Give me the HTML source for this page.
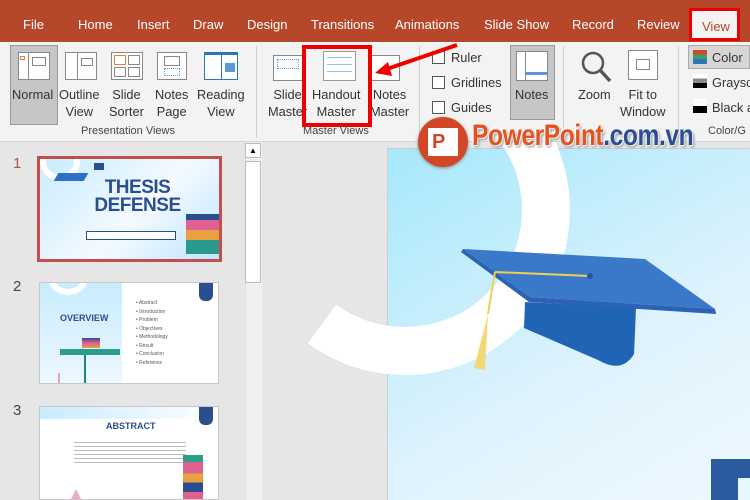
<!DOCTYPE html>
<html><head><meta charset="utf-8"><style>
*{margin:0;padding:0;box-sizing:border-box}
body{width:750px;height:500px;overflow:hidden;position:relative;font-family:"Liberation Sans",sans-serif;background:#e6e6e6}
.abs{position:absolute}
#tabs{left:0;top:0;width:750px;height:42px;background:#b7472a;color:#fff;font-size:13px}
#tabs span{position:absolute;top:17px}
#ribbon{left:0;top:42px;width:750px;height:100px;background:#f3f3f3;border-bottom:1px solid #d6d6d6}
.lbl{position:absolute;font-size:12.8px;color:#333;text-align:center;line-height:17px;white-space:nowrap}
.grp{position:absolute;font-size:11px;color:#444;top:83px;white-space:nowrap}
.sep{position:absolute;top:4px;width:1px;height:92px;background:#d0d0d0}
.ic{position:absolute;border:1px solid #888;background:#fff}
.cb{position:absolute;width:13px;height:13px;border:1px solid #555;background:#fff}
.thumb{position:absolute;left:39px;width:180px;border:1px solid #c8c8c8;overflow:hidden}
.num{position:absolute;left:13px;font-size:15px;color:#444}
.ln{position:absolute;height:1px;background:#8aa}
</style></head><body>
<div id="tabs" class="abs">
<span style="left:23px">File</span><span style="left:78px">Home</span><span style="left:137px">Insert</span><span style="left:193px">Draw</span><span style="left:247px">Design</span><span style="left:311px">Transitions</span><span style="left:395px">Animations</span><span style="left:484px">Slide Show</span><span style="left:572px">Record</span><span style="left:637px">Review</span>
<div class="abs" style="left:689px;top:8px;width:51px;height:33px;background:#f3f3f3;border:3px solid #e00;color:#b7472a;padding:8px 0 0 10px">View</div>
</div>
<div id="ribbon" class="abs">
<div class="abs" style="left:10px;top:3px;width:48px;height:80px;background:#c6c6c6;border:1px solid #999"></div>
<div class="ic" style="left:18px;top:10px;width:32px;height:28px"><div class="abs" style="left:9px;top:0;width:1px;height:26px;background:#888"></div><div class="abs" style="left:1px;top:3px;width:5px;height:4px;border:1px solid #e8803a"></div><div class="abs" style="left:13px;top:4px;width:14px;height:9px;border:1px solid #888"></div></div>
<div class="ic" style="left:65px;top:10px;width:32px;height:28px"><div class="abs" style="left:11px;top:0;width:1px;height:26px;background:#888"></div><div class="abs" style="left:15px;top:5px;width:12px;height:8px;border:1px solid #888"></div></div>
<div class="ic" style="left:111px;top:10px;width:32px;height:28px"><div class="abs" style="left:2px;top:2px;width:12px;height:10px;border:1px solid #e8803a"></div><div class="abs" style="left:16px;top:2px;width:12px;height:10px;border:1px solid #888"></div><div class="abs" style="left:2px;top:14px;width:12px;height:10px;border:1px solid #888"></div><div class="abs" style="left:16px;top:14px;width:12px;height:10px;border:1px solid #888"></div></div>
<div class="ic" style="left:157px;top:10px;width:30px;height:28px"><div class="abs" style="left:6px;top:3px;width:16px;height:10px;border:1px solid #888"></div><div class="abs" style="left:6px;top:15px;width:16px;height:8px;border:1px dotted #5b9bd5"></div></div>
<div class="ic" style="left:204px;top:10px;width:34px;height:28px;border-color:#2e75b6;border-top:3px solid #2e75b6"><div class="abs" style="left:16px;top:0;width:1px;height:24px;background:#2e75b6"></div><div class="abs" style="left:20px;top:8px;width:10px;height:9px;background:#5b9bd5"></div></div>
<div class="lbl" style="left:12px;top:44px">Normal</div>
<div class="lbl" style="left:59px;top:44px">Outline<br>View</div>
<div class="lbl" style="left:109px;top:44px">Slide<br>Sorter</div>
<div class="lbl" style="left:155px;top:44px">Notes<br>Page</div>
<div class="lbl" style="left:197px;top:44px">Reading<br>View</div>
<div class="grp" style="left:81px">Presentation Views</div>
<div class="sep" style="left:256px"></div>
<div class="ic" style="left:273px;top:13px;width:30px;height:26px"><div class="abs" style="left:3px;top:3px;width:22px;height:10px;border:1px dotted #5b9bd5"></div></div>
<div class="ic" style="left:323px;top:9px;width:33px;height:30px;border-color:#999"><div class="abs" style="left:3px;top:3px;width:25px;height:22px;background:repeating-linear-gradient(#fff 0 2px,#9cc3e6 2px 3px,#fff 3px 7px)"></div></div>
<div class="ic" style="left:370px;top:13px;width:30px;height:26px"></div>
<div class="lbl" style="left:268px;top:44px">Slide<br>Master</div>
<div class="lbl" style="left:312px;top:44px">Handout<br>Master</div>
<div class="lbl" style="left:370px;top:44px">Notes<br>Master</div>
<div class="abs" style="left:302px;top:3px;width:70px;height:82px;border:4px solid #e00"></div>
<div class="grp" style="left:303px">Master Views</div>
<div class="sep" style="left:419px"></div>
<div class="cb" style="left:432px;top:9px"></div><div class="lbl" style="left:451px;top:7px">Ruler</div>
<div class="cb" style="left:432px;top:34px"></div><div class="lbl" style="left:451px;top:32px">Gridlines</div>
<div class="cb" style="left:432px;top:59px"></div><div class="lbl" style="left:451px;top:57px">Guides</div>
<div class="abs" style="left:510px;top:3px;width:45px;height:75px;background:#c6c6c6;border:1px solid #999"></div>
<div class="ic" style="left:516px;top:9px;width:32px;height:30px"><div class="abs" style="left:8px;top:0;width:1px;height:28px;background:#888"></div><div class="abs" style="left:8px;top:20px;width:22px;height:3px;background:#5b9bd5"></div></div>
<div class="lbl" style="left:515px;top:44px">Notes</div>
<div class="sep" style="left:563px"></div>
<svg class="abs" style="left:580px;top:8px" width="32" height="34"><circle cx="13" cy="13" r="10" fill="none" stroke="#555" stroke-width="2.5"/><line x1="20" y1="20" x2="30" y2="31" stroke="#555" stroke-width="3.5"/></svg>
<div class="ic" style="left:628px;top:8px;width:30px;height:30px"><div class="abs" style="left:7px;top:8px;width:14px;height:11px;border:1px solid #888"></div></div>
<div class="lbl" style="left:578px;top:44px">Zoom</div>
<div class="lbl" style="left:620px;top:44px">Fit to<br>Window</div>
<div class="sep" style="left:678px"></div>
<div class="abs" style="left:688px;top:3px;width:62px;height:24px;background:#d6d6d6;border:1px solid #aaa"></div>
<div class="abs" style="left:693px;top:8px;width:14px;height:14px;background:linear-gradient(#d24726 33%,#3c9c73 33% 66%,#2e75b6 66%)"></div>
<div class="lbl" style="left:712px;top:7px">Color</div>
<div class="abs" style="left:693px;top:32px;width:14px;height:14px;background:linear-gradient(#fff 33%,#888 33% 66%,#000 66%)"></div>
<div class="lbl" style="left:712px;top:32px">Graysc</div>
<div class="abs" style="left:693px;top:57px;width:14px;height:14px;background:linear-gradient(#fff 50%,#000 50%)"></div>
<div class="lbl" style="left:712px;top:57px">Black a</div>
<div class="grp" style="left:708px">Color/G</div>
</div>
<svg class="abs" style="left:372px;top:40px" width="90" height="40"><line x1="85" y1="5" x2="12" y2="30" stroke="#e00" stroke-width="4"/><polygon points="3,33 16,22 20,36" fill="#e00"/></svg>
<!-- thumbnails -->
<div class="num" style="color:#c0504d;top:155px">1</div>
<div class="thumb" style="left:37px;top:156px;width:185px;height:106px;border:3px solid #c0504d;background:linear-gradient(135deg,#c8ecff,#f4faff 55%,#bfe4ff)">
<div class="abs" style="left:0;top:-18px;width:40px;height:40px;border:6px solid #fff;border-radius:50%"></div>
<div class="abs" style="left:54px;top:4px;width:10px;height:7px;background:#2b4e91"></div>
<div class="abs" style="left:50px;top:20px;font-weight:bold;font-size:19px;line-height:18px;color:#2b4e91;text-align:center;width:95px;letter-spacing:-0.5px">THESIS<br>DEFENSE</div>
<div class="abs" style="left:46px;top:72px;width:90px;height:9px;border:1px solid #2b4e91;background:#fff"></div>
<div class="abs" style="left:16px;top:14px;width:30px;height:8px;background:#2f6fc8;transform:skewX(-30deg)"></div>
<div class="abs" style="left:146px;top:55px;width:34px;height:40px;background:linear-gradient(#2b4e91 15%,#e06090 15% 40%,#e8a040 40% 65%,#2a9b8a 65%)"></div>
</div>
<div class="num" style="top:278px">2</div>
<div class="thumb" style="top:282px;height:102px;background:#fff">
<div class="abs" style="left:0;top:0;width:82px;height:102px;background:linear-gradient(#c8ecff,#eef8ff)"></div>
<div class="abs" style="left:8px;top:-22px;width:40px;height:34px;border:6px solid #fff;border-radius:50%"></div>
<div class="abs" style="left:20px;top:30px;font-weight:bold;font-size:9px;color:#2b4e91">OVERVIEW</div>
<div class="abs" style="left:18px;top:90px;width:50px;height:12px;border-left:2px solid #e9a5c0"></div>
<div class="abs" style="left:20px;top:66px;width:60px;height:6px;background:#2aa08a"></div>
<div class="abs" style="left:44px;top:72px;width:2px;height:30px;background:#1f8a78"></div>
<div class="abs" style="left:42px;top:55px;width:18px;height:10px;background:linear-gradient(#2b4e91,#e06090,#e8a040)"></div>
<div class="abs" style="left:96px;top:16px;font-size:5px;line-height:8.5px;color:#555">• Abstract<br>• Introduction<br>• Problem<br>• Objectives<br>• Methodology<br>• Result<br>• Conclusion<br>• Reference</div>
<div class="abs" style="left:159px;top:0;width:14px;height:18px;background:#2b4e91;border-radius:0 0 6px 6px"></div>
</div>
<div class="num" style="top:402px">3</div>
<div class="thumb" style="top:406px;height:94px;background:#fff">
<div class="abs" style="left:0;top:0;width:180px;height:12px;background:linear-gradient(90deg,#c8ecff,#fff)"></div>
<div class="abs" style="left:66px;top:14px;font-weight:bold;font-size:9px;color:#2b4e91">ABSTRACT</div>
<div class="abs" style="left:34px;top:33px;width:112px;height:26px;background:repeating-linear-gradient(#fff 0 2px,#bbb 2px 3px,#fff 3px 4px)"></div>
<div class="abs" style="left:159px;top:0;width:14px;height:18px;background:#2b4e91;border-radius:0 0 6px 6px"></div>
<div class="abs" style="left:143px;top:48px;width:20px;height:46px;background:linear-gradient(#2aa08a 15%,#e06090 15% 40%,#e8a040 40% 60%,#2b4e91 60% 80%,#e06090 80%)"></div>
<div class="abs" style="left:30px;top:82px;width:12px;height:12px;background:#f0a8c8;clip-path:polygon(50% 0,100% 100%,0 100%)"></div>
</div>
<!-- scrollbar -->
<div class="abs" style="left:245px;top:142px;width:17px;height:358px;background:#f0f0f0;border-left:1px solid #ddd"></div>
<div class="abs" style="left:245px;top:143px;width:16px;height:15px;background:#fff;border:1px solid #bbb;font-size:8px;text-align:center;line-height:13px">▲</div>
<div class="abs" style="left:245px;top:161px;width:16px;height:122px;background:#fff;border:1px solid #bbb"></div>
<!-- slide -->
<div class="abs" style="left:387px;top:148px;width:363px;height:352px;background:linear-gradient(150deg,#a6e8fb,#dff3fd 60%,#eef8fe);border-left:1px solid #ccc;border-top:1px solid #ccc"></div>
<svg class="abs" style="left:262px;top:142px" width="488" height="358">
<path d="M 143 -73 A 141 141 0 1 1 60 182" fill="none" stroke="#fff" stroke-width="48"/>
<path d="M 263 160 L 374 166 L 372 212 Q 360 232 336 218 L 262 186 Z" fill="#1f64b5"/>
<polygon points="201,107 383,117 453,167 268,155" fill="#3a78c9"/>
<polygon points="201,107 268,155 453,167 454,172 267,160 199,110" fill="#2a63b4"/>
<path d="M 233 130 L 328 134" stroke="#f0d050" stroke-width="2" fill="none"/>
<path d="M 233 130 L 226 172" stroke="#f0d050" stroke-width="2" fill="none"/>
<polygon points="226,172 212,226 223,228" fill="#f3d878"/>
<circle cx="328" cy="134" r="3" fill="#1f5aa8"/>
</svg>
<div class="abs" style="left:711px;top:459px;width:39px;height:41px;background:#2b5aa0"></div>
<div class="abs" style="left:738px;top:478px;width:12px;height:22px;background:#e9f6fd"></div>
<!-- watermark -->
<div class="abs" style="left:418px;top:117px;width:50px;height:50px;border-radius:50%;background:#d24726;box-shadow:0 1px 3px #888"></div>
<div class="abs" style="left:428px;top:128px;width:30px;height:28px;background:#fff;color:#d24726;font-weight:bold;font-size:20px;line-height:28px;padding-left:4px">P</div>
<div class="abs" style="left:472px;top:119px;font-family:'Liberation Sans Narrow','Liberation Sans',sans-serif;font-weight:bold;font-size:30px;letter-spacing:-0.5px;transform:scaleX(0.82);transform-origin:left;text-shadow:1px 1px 1px #fff,-1px -1px 1px #fff,2px 2px 3px #888;white-space:nowrap"><span style="color:#e2531f">PowerPoint</span><span style="color:#2b4e91">.com.vn</span></div>
</body></html>
